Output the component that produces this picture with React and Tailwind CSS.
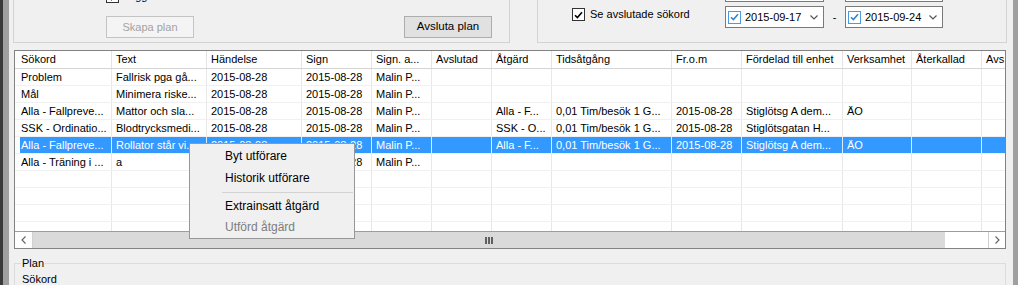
import React from "react";

const cols = [
  { name: "Sökord", w: "w-[97px]", first: true },
  { name: "Text", w: "w-[95px]" },
  { name: "Händelse", w: "w-[95px]" },
  { name: "Sign", w: "w-[70px]" },
  { name: "Sign. a...", w: "w-[60px]" },
  { name: "Avslutad", w: "w-[60px]" },
  { name: "Åtgärd", w: "w-[60px]" },
  { name: "Tidsåtgång", w: "w-[120px]" },
  { name: "Fr.o.m", w: "w-[70px]" },
  { name: "Fördelad till enhet", w: "w-[101px]" },
  { name: "Verksamhet", w: "w-[69px]" },
  { name: "Återkallad", w: "w-[70px]" },
  { name: "Avs", w: "w-[60px]" },
];

const D = "2015-08-28";
const rowA = ["Alla - Fallpreve...", "", D, D, "Malin P...", "", "Alla - F...", "0,01 Tim/besök 1 G...", D, "Stiglötsg A dem...", "ÄO", "", ""];
const rows = [
  { c: ["Problem", "Fallrisk pga gå...", D, D, "Malin P...", "", "", "", "", "", "", "", ""] },
  { c: ["Mål", "Minimera riske...", D, D, "Malin P...", "", "", "", "", "", "", "", ""] },
  { c: rowA.map((v, i) => (i === 1 ? "Mattor och sla..." : v)) },
  { c: ["SSK - Ordinatio...", "Blodtrycksmedi...", D, D, "Malin P...", "", "SSK - O...", "0,01 Tim/besök 1 G...", D, "Stiglötsgatan H...", "", "", ""] },
  { c: rowA.map((v, i) => (i === 1 ? "Rollator står vi..." : v)), sel: true },
  { c: ["Alla - Träning i ...", "a", D, D, "Malin P...", "", "", "", "", "", "", "", ""] },
  { c: Array(13).fill("") },
  { c: Array(13).fill("") },
  { c: Array(13).fill("") },
  { c: Array(13).fill("") },
];

function Check({ color = "#000", border = "border-[#333333]" }) {
  return (
    <div className={`w-[13px] h-[13px] shrink-0 border ${border} bg-white flex items-center justify-center`}>
      <svg width="9" height="8" viewBox="0 0 9 8">
        <path d="M1 4.2 L3.4 6.6 L8 1.2" fill="none" stroke={color} strokeWidth="1.6" />
      </svg>
    </div>
  );
}

function DatePicker({ w, text }) {
  return (
    <div className={`${w} h-[22px] border border-[#7a7a7a] bg-white flex items-center`}>
      <div className="ml-[2px]">
        <Check color="#2f86d8" border="border-[#4f9bd9]" />
      </div>
      <span className="ml-[4px] leading-[13px]">{text}</span>
      <svg className="ml-auto mr-[5px]" width="8" height="5" viewBox="0 0 8 5">
        <path d="M0.5 0.5 L4 4 L7.5 0.5" fill="none" stroke="#555" strokeWidth="1.2" />
      </svg>
    </div>
  );
}

function Cell({ col, text, sel, header }) {
  if (col.first) {
    return (
      <div className={`${col.w} shrink-0 h-full pl-[5px] border-r ${sel ? "border-[#dcecff]" : header ? "border-[#e3e3e3]" : "border-[#e8e8e8]"} flex`}>
        <div className={`flex-1 h-full pl-[1px] overflow-hidden whitespace-nowrap ${sel ? "bg-[#3399ff] text-white" : ""}`}>{text}</div>
      </div>
    );
  }
  return (
    <div
      className={`${col.w} shrink-0 h-full pl-[4px] overflow-hidden whitespace-nowrap border-r ${
        sel ? "bg-[#3399ff] text-white border-[#dcecff]" : header ? "border-[#e3e3e3]" : "border-[#e8e8e8]"
      }`}
    >
      {text}
    </div>
  );
}

export default function App() {
  return (
    <div className="relative w-[1018px] h-[285px] overflow-hidden bg-[#f0f0f0] flex font-['Liberation_Sans',Arial,sans-serif] text-[11px] text-black">
      <div className="w-[3px] shrink-0 bg-[#3a3a3a]" />
      <div className="w-[6px] shrink-0 bg-[#a0a0a0]" />
      <div className="w-[1004px] shrink-0 flex flex-col">
        {/* top area */}
        <div className="h-[44px] flex items-start shrink-0">
          <div className="ml-[4px] w-[497px] h-[43px] border-l border-b border-r border-[#d3d3d3] flex flex-col">
            <div className="-mt-[11px] h-[14px] pl-[92px] flex items-end">
              <Check />
              <span className="ml-[4px] leading-[13px]">Lägg till</span>
            </div>
            <div className="mt-[13px] flex">
              <div className="ml-[92px] w-[88px] h-[22px] border border-[#c4c4c4] bg-[#f4f4f4] text-[#a3a3a3] flex items-center justify-center">
                Skapa plan
              </div>
              <div className="ml-[210px] w-[88px] h-[22px] border border-[#adadad] bg-[#e1e1e1] text-[11.5px] flex items-center justify-center">
                Avsluta plan
              </div>
            </div>
          </div>
          <div className="ml-[27px] w-[470px] h-[43px] border-l border-b border-r border-[#d3d3d3] flex flex-col">
            <div className="h-[2px] flex">
              <div className="ml-[187px] w-[99px] h-[2px] border-x border-b border-[#7a7a7a] bg-white" />
              <div className="ml-[21px] w-[98px] h-[2px] border-x border-b border-[#7a7a7a] bg-white" />
            </div>
            <div className="mt-[4px] flex items-start">
              <div className="ml-[34px] w-[153px] mt-[2px] flex items-center">
                <Check />
                <span className="ml-[5px] leading-[13px]">Se avslutade sökord</span>
              </div>
              <DatePicker w="w-[99px]" text="2015-09-17" />
              <div className="w-[21px] h-[22px] flex items-center justify-center">-</div>
              <DatePicker w="w-[98px]" text="2015-09-24" />
            </div>
          </div>
        </div>

        {/* grid */}
        <div className="mt-[6px] ml-[5px] w-[992px] h-[199px] shrink-0 border border-[#828282] bg-white flex flex-col overflow-hidden">
          <div className="h-[18px] shrink-0 flex border-b border-[#d5d5d5] leading-[17px]">
            {cols.map((c) => (
              <Cell key={c.name} col={c} text={c.name} header />
            ))}
          </div>
          <div className="h-[162px] shrink-0 overflow-hidden">
            {rows.map((r, i) => (
              <div key={i} className="h-[17px] flex border-b border-[#f0f0f0] leading-[16px]">
                {cols.map((c, j) => (
                  <Cell key={j} col={c} text={r.c[j]} sel={r.sel} />
                ))}
              </div>
            ))}
          </div>
          <div className="h-[17px] shrink-0 border-t border-[#9c9c9c] flex bg-white">
            <div className="w-[18px] h-full border-r border-[#d0d0d0] flex items-center justify-center">
              <svg width="5" height="8" viewBox="0 0 5 8">
                <path d="M4.5 0.5 L1 4 L4.5 7.5" fill="none" stroke="#606060" strokeWidth="1.1" />
              </svg>
            </div>
            <div className="w-[912px] h-full bg-[#dadada] flex items-center justify-center gap-[1px]">
              <div className="w-[2px] h-[7px] bg-[#606060]" />
              <div className="w-[2px] h-[7px] bg-[#606060]" />
              <div className="w-[2px] h-[7px] bg-[#606060]" />
            </div>
            <div className="flex-1 h-full" />
            <div className="w-[17px] h-full border-l border-[#d0d0d0] flex items-center justify-center">
              <svg width="5" height="8" viewBox="0 0 5 8">
                <path d="M0.5 0.5 L4 4 L0.5 7.5" fill="none" stroke="#606060" strokeWidth="1.1" />
              </svg>
            </div>
          </div>
        </div>

        {/* Plan group */}
        <div className="mt-[14px] ml-[5px] w-[992px] flex-1 border-t border-l border-r border-[#dcdcdc] flex flex-col">
          <span className="-mt-[7px] ml-[6px] px-[1px] w-fit bg-[#f0f0f0] leading-[13px]">Plan</span>
          <span className="mt-[3px] ml-[7px] leading-[13px]">Sökord</span>
        </div>
      </div>
      <div className="w-[5px] shrink-0 bg-[#a0a0a0]" />

      {/* context menu */}
      <div className="absolute left-[189px] top-[143px] w-[166px] h-[96px] border border-[#979797] bg-[#f0f0f0] py-[1px] text-[12px] flex flex-col">
        <div className="h-[22px] pl-[35px] flex items-center">Byt utförare</div>
        <div className="h-[22px] pl-[35px] flex items-center">Historik utförare</div>
        <div className="h-[6px] flex items-center">
          <div className="ml-[32px] mr-[1px] flex-1 h-px bg-[#d2d2d2]" />
        </div>
        <div className="h-[21px] pl-[35px] flex items-center">Extrainsatt åtgärd</div>
        <div className="h-[21px] pl-[35px] flex items-center text-[#7d7d7d]">Utförd åtgärd</div>
      </div>
    </div>
  );
}
